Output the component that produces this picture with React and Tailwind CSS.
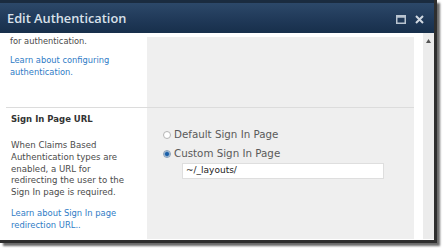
export default function App() {
  const small = { fontFamily: '"DejaVu Sans", Verdana, sans-serif' };
  return (
    <div className="w-[445px] h-[248px] bg-white overflow-hidden" style={small}>
      <div className="w-[437px] h-[243px] flex flex-col bg-white border-r-[3px] border-b-[3px] border-[#2e2e2e] shadow-[3px_3px_2px_#6a6a6a]">
        {/* title bar */}
        <div className="h-[33px] shrink-0 flex items-center justify-between pl-[7px] pr-[10px] pt-[2px] border-t-[3px] border-[#1a2b3f] bg-[linear-gradient(#2c4869,#1f3857_60%,#172f4b)]">
          <span className="text-[12.8px] font-semibold text-[#d9e1ea]" style={{ fontFamily: '"Open Sans", sans-serif' }}>
            Edit Authentication
          </span>
          <div className="flex items-center gap-[9px]">
            <svg width="10" height="9" viewBox="0 0 10 9">
              <rect x="0.75" y="0.75" width="8.5" height="7.5" fill="none" stroke="#b9c4d0" strokeWidth="1.5" />
              <rect x="0.75" y="0.75" width="8.5" height="2" fill="#b9c4d0" />
            </svg>
            <svg width="9" height="9" viewBox="0 0 9 9">
              <path d="M1 1L8 8M8 1L1 8" stroke="#d0d8e1" strokeWidth="2" />
            </svg>
          </div>
        </div>

        <div className="flex-1 flex min-h-0 pb-[1px]">
          <div className="flex-1 flex flex-col">
            {/* row 1 */}
            <div className="h-[74px] flex">
              <div className="w-[147px] pl-[10px] pt-[2px] text-[8.3px] leading-[12px]">
                <div className="text-[#4b4b4b]">for authentication.</div>
                <div className="mt-[8px] text-[#2f7cc6] leading-[11.5px]">
                  Learn about configuring
                  <br />
                  authentication.
                </div>
              </div>
              <div className="flex-1 mt-[4px] bg-[#efefef]" />
            </div>
            {/* row 2 */}
            <div className="flex-1 flex ml-[6px] border-t border-[#dcdcdc]">
              <div className="w-[141px] pl-[5px] pt-[5px]">
                <div className="text-[8.5px] font-bold text-[#333] leading-[12px]">Sign In Page URL</div>
                <div className="mt-[15px] text-[8.6px] leading-[11.8px] text-[#4b4b4b] whitespace-nowrap">
                  When Claims Based
                  <br />
                  Authentication types are
                  <br />
                  enabled, a URL for
                  <br />
                  redirecting the user to the
                  <br />
                  Sign In page is required.
                </div>
                <div className="mt-[9px] text-[8.4px] leading-[11.8px] text-[#2f7cc6] whitespace-nowrap">
                  Learn about Sign In page
                  <br />
                  redirection URL..
                </div>
              </div>
              <div className="flex-1 bg-[#efefef] pl-[16px] pt-[20px] text-[10.3px] text-[#5a5a5a]">
                <div className="flex items-center gap-[3px] h-[13px]">
                  <span className="w-[8px] h-[8px] rounded-full border border-[#b5b5b5] bg-white" />
                  <span>Default Sign In Page</span>
                </div>
                <div className="flex items-center gap-[3px] h-[13px] mt-[6px]">
                  <span className="w-[8px] h-[8px] rounded-full border border-[#8a9fb5] bg-[radial-gradient(circle,#1a5fa8_35%,#bcd0e4_70%)]" />
                  <span>Custom Sign In Page</span>
                </div>
                <div className="mt-[3px] ml-[19px] w-[202px] h-[16px] bg-white border border-[#dedede] flex items-center pl-[3px] text-[9px] text-[#222]">
                  ~/_layouts/
                </div>
              </div>
            </div>
          </div>
          {/* white gap and scrollbar */}
          <div className="w-[9px] bg-white" />
          <div className="w-[11px] bg-[#ececec] flex justify-center pt-[6px]">
            <svg width="5" height="4" viewBox="0 0 5 4">
              <path d="M2.5 0L5 4H0Z" fill="#555" />
            </svg>
          </div>
        </div>
      </div>
    </div>
  );
}
